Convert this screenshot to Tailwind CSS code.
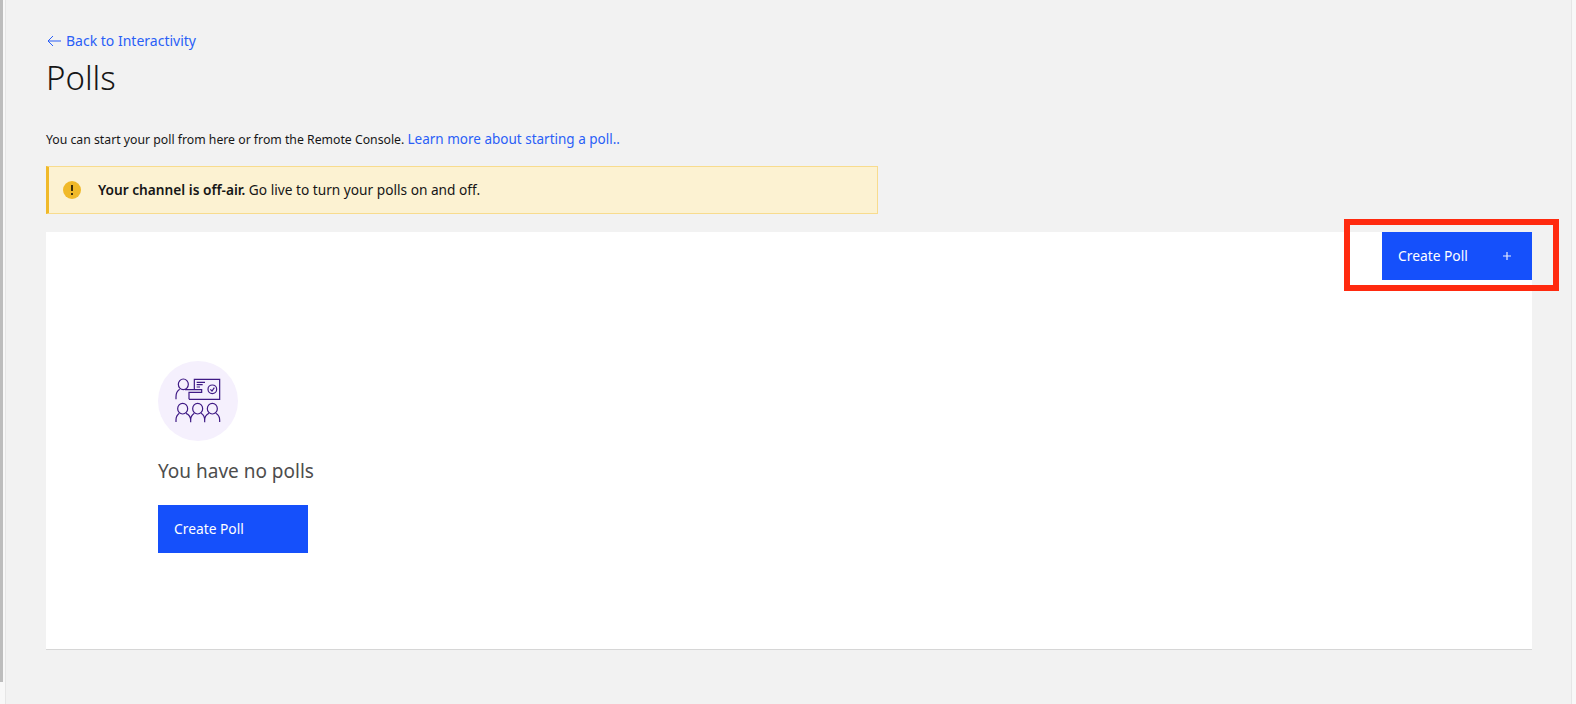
<!DOCTYPE html>
<html lang="en">
<head>
    <meta charset="UTF-8">
    <meta name="viewport" content="width=device-width, initial-scale=1.0">
    <title>Polls</title>
    <script src="https://cdn.jsdelivr.net/npm/@tailwindcss/browser@4"></script>
</head>
<body class="h-[704px] overflow-hidden flex bg-[#f8f8f8] font-['Noto_Sans',sans-serif] text-[#161616]">
    <div class="w-[3px] h-[682px] bg-[#bdbdbd] shrink-0"></div>
    <div class="w-[2px] shrink-0"></div>
    <main class="relative w-[1567px] h-[704px] shrink-0 bg-[#f2f2f2] border-x border-[#e6e6e6] pl-[40px] pr-[39px]">
        <a class="flex items-center h-[18px] mt-[32px] text-[14px] leading-[18px] text-[#2a5ff7]">
            <svg class="w-[14px] h-[12px] mr-[5px] ml-[1px]" viewBox="0 0 14 12" fill="none" stroke="#2a5ff7" stroke-width="1"><path d="M14 6H1M6 1 1 6l5 5"/></svg>
            Back to Interactivity
        </a>
        <h1 class="mt-[8px] h-[40px] text-[33px] leading-[40px] font-light">Polls</h1>
        <p class="mt-[31px] h-[20px] text-[12.25px] leading-[20px]">You can start your poll from here or from the Remote Console. <a class="text-[13.5px] text-[#2a5ff7]">Learn more about starting a poll..</a></p>
        <div class="mt-[17px] w-[832px] h-[48px] flex items-center bg-[#fcf2d2] border border-l-[3px] border-[#f8dc8e] border-l-[#f0b929] pl-[14px] text-[13.7px]">
            <span class="w-[18px] h-[18px] rounded-full bg-[#f0b929] flex items-center justify-center mr-[17px]">
                <svg class="w-[4px] h-[12px]" viewBox="0 0 4 12" fill="#3d2f0a"><path d="M1 1h2v6H1zM1 9h2v2H1z"/></svg>
            </span>
            <p><b class="font-semibold">Your channel is off-air.</b> Go live to turn your polls on and off.</p>
        </div>
        <section class="relative mt-[18px] h-[418px] bg-white border-b border-[#d6d6d6] pl-[112px] pt-[129px]">
            <button class="absolute top-0 right-0 w-[150px] h-[48px] bg-[#1550fb] text-white text-[13.8px] flex items-center justify-between pl-[16px] pr-[21px]">
                Create Poll
                <svg class="w-[8px] h-[8px]" viewBox="0 0 8 8" stroke="#e8edff" stroke-width="1.2"><path d="M4 0v8M0 4h8"/></svg>
            </button>
            <div class="w-[80px] h-[80px] rounded-full bg-[#f5f0fd]">
                <svg class="w-[80px] h-[80px]" viewBox="54 33 240 240" fill="none" stroke="#3f1a85" stroke-width="3.6">
                    <ellipse cx="130" cy="103" rx="15" ry="16"/>
                    <path d="M108 148v-8c0-10 3-17 11-22M135 119h50v8h-38v21"/>
                    <path d="M163 117V88h76v60h-92"/>
                    <path d="M170 97h25M170 104h18M170 111h10"/>
                    <circle cx="217" cy="118" r="13"/>
                    <path d="m211 118 5 5 7-10"/>
                    <ellipse cx="128" cy="176" rx="15" ry="16"/>
                    <ellipse cx="173" cy="176" rx="15" ry="16"/>
                    <ellipse cx="217" cy="176" rx="15" ry="16"/>
                    <path d="M108 216v-6c0-9 3-15 10-20M138 190c9 4 14 11 14 20v7M152 217v-7c0-9 5-16 11-20M183 190c7 4 11 11 11 20v7M194 217v-7c0-9 5-16 13-20M227 190c8 4 12 11 12 20v6"/>
                </svg>
            </div>
            <h2 class="mt-[16px] h-[28px] text-[19px] leading-[28px] text-[#4d4d4d]">You have no polls</h2>
            <button class="mt-[20px] w-[150px] h-[48px] bg-[#1550fb] text-white text-[13.8px] text-left pl-[16px]">Create Poll</button>
        </section>
        <div class="absolute left-[1338px] top-[219px] w-[215px] h-[72px] border-[6px] border-[#ff2a0f]"></div>
    </main>
    <div class="flex-1 bg-[#f8f8f8]"></div>
</body>
</html>
